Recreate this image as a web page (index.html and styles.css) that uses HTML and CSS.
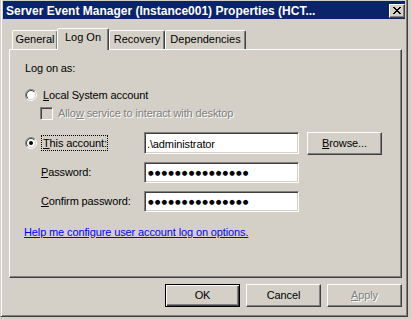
FILE: index.html
```html
<!DOCTYPE html>
<html>
<head>
<meta charset="utf-8">
<link rel="stylesheet" href="styles.css">
</head>
<body>
<div class="window">
  <div class="titlebar">
    <span class="title">Server Event Manager (Instance001) Properties (HCT...</span>
    <div class="close">
      <svg width="8" height="7" viewBox="0 0 8 7"><path fill="#000" d="M0 0h2v1H0z M6 0h2v1H6z M1 1h2v1H1z M5 1h2v1H5z M2 2h4v1H2z M3 3h2v1H3z M2 4h4v1H2z M1 5h2v1H1z M5 5h2v1H5z M0 6h2v1H0z M6 6h2v1H6z"/></svg>
    </div>
  </div>
  <div class="client">
    <div class="tabs">
      <div class="tab tab-general">General</div>
      <div class="tab tab-logon selected">Log On</div>
      <div class="tab tab-recovery">Recovery</div>
      <div class="tab tab-deps">Dependencies</div>
    </div>
    <div class="panel">
      <div class="heading">Log on as:</div>
      <div class="opt-row">
        <svg class="radio" width="12" height="12" viewBox="0 0 12 12">
          <defs>
            <linearGradient id="ringOuter" x1="0" y1="0" x2="1" y2="1">
              <stop offset="0.5" stop-color="#808080"/><stop offset="0.5" stop-color="#ffffff"/>
            </linearGradient>
            <linearGradient id="ringInner" x1="0" y1="0" x2="1" y2="1">
              <stop offset="0.5" stop-color="#404040"/><stop offset="0.5" stop-color="#d4d0c8"/>
            </linearGradient>
          </defs>
          <circle cx="6" cy="6" r="4.5" fill="#fff"/>
          <circle cx="6" cy="6" r="5.5" fill="none" stroke="url(#ringOuter)" stroke-width="1"/>
          <circle cx="6" cy="6" r="4.5" fill="none" stroke="url(#ringInner)" stroke-width="1"/>
        </svg>
        <span class="opt-label"><u>L</u>ocal System account</span>
      </div>
      <div class="check-row">
        <span class="checkbox"></span>
        <span class="check-label disabled">Allo<u>w</u> service to interact with desktop</span>
      </div>
      <div class="account-row">
        <div class="account-choice">
          <svg class="radio" width="12" height="12" viewBox="0 0 12 12">
            <circle cx="6" cy="6" r="4.5" fill="#fff"/>
            <circle cx="6" cy="6" r="5.5" fill="none" stroke="url(#ringOuter)" stroke-width="1"/>
            <circle cx="6" cy="6" r="4.5" fill="none" stroke="url(#ringInner)" stroke-width="1"/>
            <circle cx="6" cy="6" r="2" fill="#000"/>
          </svg>
          <span class="focus-label"><u>T</u>his account:</span>
        </div>
        <div class="edit edit-text">.\administrator</div>
        <div class="btn btn-browse"><u>B</u>rowse...</div>
      </div>
      <div class="field-row">
        <span class="field-label"><u>P</u>assword:</span>
        <div class="edit edit-pass">●●●●●●●●●●●●●●●</div>
      </div>
      <div class="field-row field-row-2">
        <span class="field-label"><u>C</u>onfirm password:</span>
        <div class="edit edit-pass">●●●●●●●●●●●●●●●</div>
      </div>
      <a class="help">Help me configure user account log on options.</a>
    </div>
    <div class="buttons">
      <div class="btn btn-default">OK</div>
      <div class="btn">Cancel</div>
      <div class="btn disabled"><u>A</u>pply</div>
    </div>
  </div>
</div>
</body>
</html>
```
FILE: styles.css
```css
html, body {
  margin: 0;
  padding: 0;
  background: #d4d0c8;
  overflow: hidden;
}
body {
  font-family: "Liberation Sans", Arial, sans-serif;
  font-size: 11px;
  letter-spacing: -0.12px;
  color: #000;
}
u { text-decoration: underline; text-underline-offset: 1px; }

.window {
  box-sizing: border-box;
  width: 408px;
  height: 319px;
  margin-top: -2px;
  border: 1px solid;
  border-color: #d4d0c8 #404040 #404040 #d4d0c8;
  box-shadow: inset 1px 1px #fff, inset -1px -1px #808080;
  padding: 2px;
  display: flex;
  flex-direction: column;
}

.titlebar {
  height: 18px;
  background: #0a246a;
  display: flex;
  align-items: center;
  justify-content: space-between;
}
.title {
  color: #fff;
  font-weight: bold;
  font-size: 12px;
  letter-spacing: 0;
  padding-left: 3px;
  padding-top: 2px;
  line-height: 14px;
  white-space: nowrap;
}
.close {
  box-sizing: border-box;
  width: 16px;
  height: 14px;
  background: #d4d0c8;
  border: 1px solid;
  border-color: #fff #404040 #404040 #fff;
  box-shadow: inset -1px -1px #808080;
  display: flex;
  align-items: center;
  justify-content: center;
  padding-bottom: 1px;
  margin-top: 2px;
}
.close svg { display: block; margin-left: -1px; }

.client {
  flex: 1;
  display: flex;
  flex-direction: column;
}

.tabs {
  display: flex;
  align-items: flex-end;
  height: 21px;
  margin-top: 9px;
  padding-left: 9px;
}
.tab {
  box-sizing: border-box;
  height: 19px;
  border-top: 1px solid #fff;
  border-left: 1px solid #fff;
  border-right: 1px solid #404040;
  box-shadow: inset -1px 0 #808080;
  border-radius: 2px 2px 0 0;
  text-align: center;
  padding-top: 2px;
  line-height: 13px;
  white-space: nowrap;
  letter-spacing: 0;
}
.tab-general { width: 46px; }
.tab-logon { width: 52px; margin-left: -1px; }
.tab-recovery { width: 56px; }
.tab-deps { width: 81px; }
.tab.selected {
  height: 22px;
  margin-bottom: -1px;
  background: #d4d0c8;
  position: relative;
  z-index: 1;
}

.panel {
  box-sizing: border-box;
  height: 229px;
  margin: 0 3px 0 6px;
  border: 1px solid;
  border-color: #fff #404040 #404040 #fff;
  box-shadow: inset -1px -1px #808080;
  padding: 12px 0 0 15px;
  display: flex;
  flex-direction: column;
  align-items: flex-start;
}
.heading { line-height: 13px; }

.opt-row {
  margin-top: 13px;
  height: 14px;
  display: flex;
  align-items: center;
}
.radio { display: block; flex: none; }
.opt-label { margin-left: 6px; line-height: 13px; }

.check-row {
  margin-top: 5px;
  height: 13px;
  display: flex;
  align-items: center;
  padding-left: 15px;
}
.checkbox {
  box-sizing: border-box;
  width: 13px;
  height: 13px;
  border: 1px solid;
  border-color: #808080 #fff #fff #808080;
  box-shadow: inset 1px 1px #404040, inset -1px -1px #d4d0c8;
  background: #d4d0c8;
}
.check-label { margin-left: 5px; line-height: 13px; }
.disabled { color: #808080; text-shadow: 1px 1px 0 #fff; }

.account-row {
  margin-top: 12px;
  height: 23px;
  display: flex;
  align-items: flex-start;
}
.account-choice {
  width: 119px;
  height: 22px;
  display: flex;
  align-items: center;
}
.focus-label {
  margin-left: 4px;
  outline: 1px dotted #000;
  outline-offset: -1px;
  padding: 2px 1px 2px 2px;
  line-height: 12px;
}
.edit {
  box-sizing: border-box;
  width: 155px;
  height: 22px;
  background: #fff;
  border: 1px solid;
  border-color: #808080 #fff #fff #808080;
  box-shadow: inset 1px 1px #404040, inset -1px -1px #d4d0c8;
  padding-left: 2px;
  display: flex;
  align-items: center;
  white-space: nowrap;
  overflow: hidden;
}
.edit-text { padding-top: 1px; }
.edit-pass {
  height: 21px;
  font-family: "DejaVu Sans", sans-serif;
  font-size: 6.5px;
  letter-spacing: 1.1px;
  padding-left: 3px;
  padding-top: 1px;
}

.btn {
  box-sizing: border-box;
  width: 75px;
  height: 23px;
  border: 1px solid;
  border-color: #fff #404040 #404040 #fff;
  box-shadow: inset -1px -1px #808080;
  display: flex;
  align-items: center;
  justify-content: center;
  line-height: 13px;
  white-space: nowrap;
}
.btn-browse { margin-left: 8px; }
.btn-default {
  border-color: #000;
  box-shadow: inset 1px 1px #fff, inset -1px -1px #404040, inset -2px -2px #808080;
}

.field-row {
  margin-top: 7px;
  display: flex;
  align-items: center;
  padding-left: 16px;
}
.field-row-2 { margin-top: 8px; }
.field-label { width: 103px; line-height: 13px; }

.help {
  margin-top: 14px;
  margin-left: -1px;
  color: #0000ff;
  text-decoration: underline;
  line-height: 13px;
  cursor: pointer;
}

.buttons {
  margin-top: 6px;
  display: flex;
  justify-content: flex-end;
  gap: 6px;
  padding-right: 3px;
}
```
